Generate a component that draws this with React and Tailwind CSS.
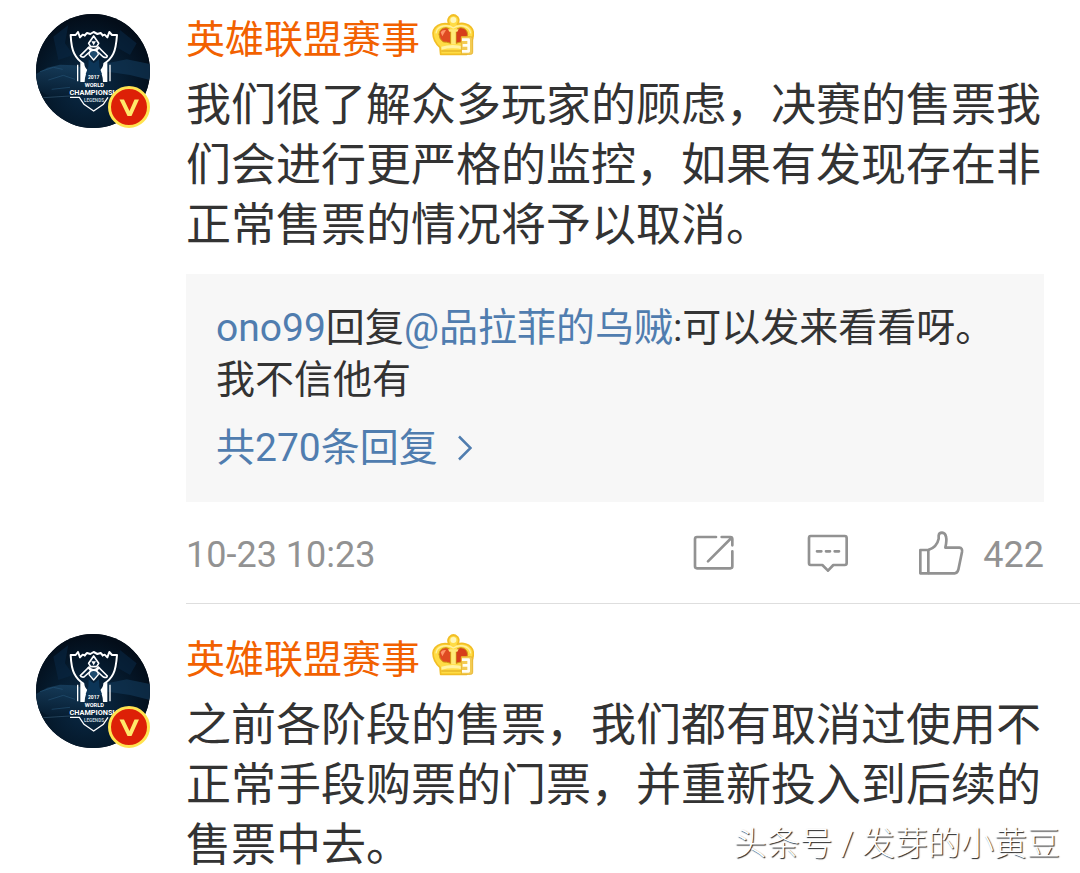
import { useId } from 'react';

const comments = [
  {
    id: 1,
    author: '英雄联盟赛事',
    text: '我们很了解众多玩家的顾虑，决赛的售票我们会进行更严格的监控，如果有发现存在非正常售票的情况将予以取消。',
    reply: { from: 'ono99', to: '@品拉菲的乌贼', text: ':可以发来看看呀。我不信他有', total: 270 },
    date: '10-23 10:23',
    likes: 422,
  },
  {
    id: 2,
    author: '英雄联盟赛事',
    text: '之前各阶段的售票，我们都有取消过使用不正常手段购票的门票，并重新投入到后续的售票中去。',
  },
];

function Avatar() {
  const id = useId();
  return (
    <svg viewBox="48 42 342 342" className="size-full" aria-hidden="true">
      <defs>
        <clipPath id={`${id}-clip`}><circle cx="219" cy="213" r="171" /></clipPath>
        <radialGradient id={`${id}-bg`} cx="0.45" cy="0.62" r="0.6">
          <stop offset="0" stopColor="#0a2a47" />
          <stop offset="0.6" stopColor="#051a2d" />
          <stop offset="1" stopColor="#030d19" />
        </radialGradient>
        <linearGradient id={`${id}-rock`} x1="0" y1="0" x2="0" y2="1">
          <stop offset="0" stopColor="#1a4465" />
          <stop offset="1" stopColor="#061c30" />
        </linearGradient>
      </defs>
      <g clipPath={`url(#${id}-clip)`}>
        <rect x="48" y="42" width="342" height="342" fill="#020c18" />
        <rect x="48" y="42" width="342" height="342" fill={`url(#${id}-bg)`} />
        <path d="M48 222 L82 203 L120 194 L165 196 L205 210 L235 222 L215 270 L150 292 L90 290 L48 265Z" fill={`url(#${id}-rock)`} opacity="0.75" />
        <path d="M262 190 L320 178 L390 192 V240 L330 225 L262 215Z" fill="#123b5b" opacity="0.6" />
        <path d="M100 110 L145 75 L135 130 L160 165 L115 180Z M300 90 L350 130 L330 165 L295 145Z" fill="#082743" opacity="0.6" />
        <path d="M60 215 L100 202 L128 208 M85 240 L130 226 L165 238 M95 268 L150 262" fill="none" stroke="#2a5b80" strokeWidth="3" opacity="0.5" />
        <path d="M70 293 L150 288" stroke="#47708d" strokeWidth="2" opacity="0.7" />

        {/* cup */}
        <g fill="none" stroke="#fff" strokeWidth="6" strokeLinejoin="round">
          <path d="M197 107 L188 104 L180 112 L174 96 L167 105 L152 105 Q154 145 163 161 Q172 180 192 192" />
          <path d="M246 107 L254 104 L262 112 L268 96 L276 105 L291 105 Q288 145 280 161 Q271 180 251 192" />
          <path d="M192 108 L201 99 L211 102 L221 96 L232 102 L242 99 L250 108" />
          <path d="M173 194 V244 M270 194 V244" strokeWidth="4" />
        </g>
        <path d="M181 188 L193 192 Q194 204 206 213 Q194 222 194 246 H181Z M262 188 L250 192 Q249 204 237 213 Q249 222 249 246 H262Z" fill="#fff" />
        <path d="M206 178 L221 190 L237 178 L238 200 L246 222 Q244 228 221 222 Q198 228 197 222 L205 200Z" fill="#0c3557" />

        {/* summoner figure */}
        <g fill="#062039" stroke="#fff" strokeWidth="5" strokeLinejoin="round">
          <path d="M221 108 L236 130 L230 140 H212 L206 130Z" />
          <path d="M207 141 L215 150 L192 171 Q182 172 181 167Z" />
          <path d="M235 141 L227 150 L250 171 Q261 175 262 168Z" />
          <path d="M207 164 Q208 151 221 151 Q234 151 235 164 L221 180Z" fill="#1d4a6d" strokeWidth="4" />
        </g>
        <path d="M214 124 H228 L221 136Z M201 142 L221 147 L241 142 L232 153 H210Z" fill="#fff" />

        <g fill="#fff" textAnchor="middle" className="font-['Roboto',sans-serif] font-bold">
          <text x="221" y="237" fontSize="15">2017</text>
          <text x="223" y="262" fontSize="17">WORLD</text>
          <text x="231" y="284" fontSize="22">CHAMPIONSHIP</text>
          <text x="222" y="307" fontSize="14" fill="#b9c8d3">LEGENDS</text>
        </g>
        <path d="M150 292 H178 L192 313 L221 333 L250 313 L264 292" fill="none" stroke="#fff" strokeWidth="4" />
      </g>
    </svg>
  );
}

function VerifiedBadge() {
  return (
    <svg viewBox="0 0 42 42" className="absolute right-0 bottom-0 size-[42px]" aria-hidden="true">
      <circle cx="21" cy="21" r="19.5" fill="#dd2007" stroke="#ffe34f" strokeWidth="3" />
      <path d="M11.5 13.5 H16 L21.5 25 L26.5 13.5 H31 L23.5 30 H19.5Z" fill="#ffe96b" />
    </svg>
  );
}

function Crown() {
  return (
    <svg viewBox="0 0 126 126" className="size-[42px]" role="img" aria-label="会员">
      <g strokeLinejoin="round">
        <path d="M26 121 L24 100 Q3 82 3 57 Q5 37 28 30 Q42 27 52 31 Q44 21 52 9 Q64 -3 77 9 Q84 21 76 31 Q88 26 101 30 Q124 37 124 60 Q123 83 107 98 L104 121Z" fill="#ffdc45" stroke="#f2be25" strokeWidth="5" />
        <circle cx="64" cy="18" r="9" fill="#fff6b8" />
        <path d="M12 58 Q14 40 34 36 Q52 33 64 42 Q78 33 94 36 Q114 40 116 58" fill="none" stroke="#fff0a0" strokeWidth="4" />
        <path d="M21 61 Q23 42 42 41 Q54 42 56 51 L56 88 Q43 83 34 84 Q22 76 21 61Z" fill="#df4a22" stroke="#d09a14" strokeWidth="3" />
        <path d="M107 61 Q105 42 86 41 Q74 42 72 51 L72 88 Q85 83 94 84 Q106 76 107 61Z" fill="#d63d1b" stroke="#d09a14" strokeWidth="3" />
        <path d="M26 55 Q31 46 42 48 L31 67Z" fill="#ff9468" />
        <path d="M48 46 H80 L76 53 H71 V91 H58 V53 H52Z" fill="#ffe978" />
        <path d="M28 98 Q62 88 98 98 L95 107 Q62 99 29 107Z" fill="#fff3a3" />
        <path d="M28 111 H90" stroke="#dba51a" strokeWidth="3" />
        <path d="M88 68 H116 Q122 68 122 74 V115 Q122 121 116 121 H88Z" fill="#f3cb52" stroke="#e9b631" strokeWidth="3" />
        <path d="M90 77 H110 V112 H90 M92 94 H110" fill="none" stroke="#fffef5" strokeWidth="8" />
      </g>
    </svg>
  );
}

function ShareIcon() {
  return (
    <svg viewBox="0 0 126 126" className="size-[42px]" fill="none" stroke="#929292" strokeWidth="8" strokeLinecap="round" strokeLinejoin="round" aria-hidden="true">
      <path d="M69 15 H12 Q6 15 6 21 V103 Q6 109 12 109 H112 Q118 109 118 103 V58" />
      <path d="M86 15 H112 Q118 15 118 21 V40 M115 18 L45 88" />
    </svg>
  );
}

function CommentIcon() {
  return (
    <svg viewBox="0 0 126 126" className="size-[42px]" fill="none" stroke="#929292" strokeWidth="8" strokeLinecap="round" strokeLinejoin="round" aria-hidden="true">
      <path d="M11 12 H113 Q119 12 119 18 V93 Q119 99 113 99 H79 L63 116 L46 99 H11 Q6 99 6 93 V18 Q6 12 11 12Z" />
      <path d="M30 58 H43 M57 58 H69 M83 58 H96" />
    </svg>
  );
}

function LikeIcon() {
  return (
    <svg viewBox="0 0 138 138" className="size-[46px]" fill="none" stroke="#929292" strokeWidth="8" strokeLinejoin="round" aria-hidden="true">
      <path d="M7 60 H31 V130 H7Z" />
      <path d="M31 60 Q57 51 62 26 V17 Q63 8 72 8 Q82 9 84 20 Q87 32 82 53 H124 Q134 54 132 66 L121 119 Q118 130 110 130 H31" />
    </svg>
  );
}

function Comment({ author, text, reply, date, likes }) {
  return (
    <article className="flex gap-9 pl-9 pt-[30px] first:pt-[14px]">
      <a href="#profile" aria-label={author} className="relative size-[114px] shrink-0">
        <Avatar />
        <VerifiedBadge />
      </a>

      <div className={`min-w-0 flex-1 ${date ? 'border-b border-[#dedede]' : ''}`}>
        <div className="pr-9">
          <div className="flex h-[52px] items-center gap-3">
            <a href="#profile" className="text-[39px] leading-[52px] text-[#f26100]">{author}</a>
            <span className="-mt-2.5"><Crown /></span>
          </div>
          <p className="mt-2.5 text-[45px] leading-[60px]">{text}</p>

          {reply && (
            <div className="mt-[18px] bg-[#f7f7f7] py-7 px-[30px] text-[39px] leading-[52px]">
              <p>
                <a href="#user" className="text-[#507daf]">{reply.from}</a>
                回复
                <a href="#user" className="text-[#507daf]">{reply.to}</a>
                {reply.text}
              </p>
              <a href="#replies" className="mt-4 flex items-center gap-5 text-[#507daf]">
                共{reply.total}条回复
                <svg viewBox="0 0 14 26" className="h-[26px] w-[14px]" fill="none" stroke="currentColor" strokeWidth="2.5" aria-hidden="true">
                  <path d="M1 1.5 L12.5 13 L1 24.5" />
                </svg>
              </a>
            </div>
          )}
        </div>

        {date && (
          <div className="flex h-[101px] items-center pr-9 text-[36px] text-[#929292]">
            <time className="mr-auto pt-1">{date}</time>
            <button type="button" aria-label="转发" className="mr-[72px]"><ShareIcon /></button>
            <button type="button" aria-label="评论" className="mr-[69px]"><CommentIcon /></button>
            <button type="button" className="flex items-center gap-[19px]">
              <LikeIcon />
              <span className="pt-1">{likes}</span>
            </button>
          </div>
        )}
      </div>
    </article>
  );
}

export default function App() {
  return (
    <main className="relative overflow-hidden bg-white font-['Roboto','Noto_Sans_CJK_SC',sans-serif] text-[#333]" lang="zh-CN">
      {comments.map(c => <Comment key={c.id} {...c} />)}
      <div className="absolute right-5 bottom-2 text-[33px] leading-[48px] font-light text-white [text-shadow:1px_1px_1px_#222]">
        头条号 / 发芽的小黄豆
      </div>
    </main>
  );
}
